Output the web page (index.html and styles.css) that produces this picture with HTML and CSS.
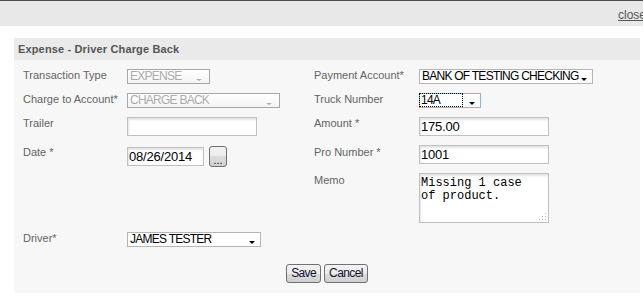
FILE: index.html
```html
<!DOCTYPE html>
<html lang="en">
<head>
  <meta charset="UTF-8" />
  <title>Expense - Driver Charge Back</title>
  <link rel="stylesheet" href="styles.css">
</head>
<body>
  <div class="topbar">
    <a href="#" class="close">close</a>
  </div>

  <div class="panel">
    <div class="panel-head">Expense - Driver Charge Back</div>

    <form class="panel-body">
      <div class="grid">
        <!-- row 1 -->
        <label class="lbl">Transaction Type</label>
        <div><span class="sel disabled w-type"><select disabled><option>EXPENSE</option></select></span></div>
        <label class="lbl">Payment Account*</label>
        <div><span class="sel w-pay"><select><option>BANK OF TESTING CHECKING</option></select></span></div>

        <!-- row 2 -->
        <label class="lbl">Charge to Account*</label>
        <div><span class="sel disabled w-charge"><select disabled><option>CHARGE BACK</option></select></span></div>
        <label class="lbl">Truck Number</label>
        <div><span class="sel focus w-truck"><select><option>14A</option></select></span></div>

        <!-- row 3 -->
        <label class="lbl">Trailer</label>
        <div><input type="text" class="txt w-text" value=""></div>
        <label class="lbl">Amount *</label>
        <div><input type="text" class="txt w-text" value="175.00"></div>

        <!-- row 4 -->
        <label class="lbl lbl-low">Date *</label>
        <div class="date-group">
          <input type="text" class="txt w-date" value="08/26/2014">
          <button type="button" class="btn btn-pick">...</button>
        </div>
        <label class="lbl lbl-low">Pro Number *</label>
        <div><input type="text" class="txt w-text" value="1001"></div>

        <!-- row 5 -->
        <span></span>
        <span></span>
        <label class="lbl lbl-low">Memo</label>
        <div class="memo-wrap"><textarea class="memo">Missing 1 case
of product.</textarea><i class="grip"></i></div>

        <!-- row 6 -->
        <label class="lbl">Driver*</label>
        <div><span class="sel w-driver"><select><option>JAMES TESTER</option></select></span></div>
      </div>

      <div class="actions">
        <button type="button" class="btn">Save</button>
        <button type="button" class="btn">Cancel</button>
      </div>
    </form>
  </div>
</body>
</html>
```

FILE: styles.css
```css
/* grises de la ventana de dialogo */
:root {
  --bar: #e8e8e8;
  --head: #eaeaea;
  --body: #f7f7f7;
  --label: #646464;
}
body {
  margin: 0;
  overflow: hidden;
  background: #fff;
  font-family: "Liberation Sans", Arial, sans-serif;
  font-size: 11px;
  color: var(--label);
}
.topbar {
  height: 25px;
  border-top: 1px solid #4a4a4a;
  background: var(--bar);
  display: flex;
  justify-content: flex-end;
  align-items: center;
}
.close {
  font-size: 12px;
  color: #555;
  margin-right: -3px;
  margin-top: 2px;
}
.panel {
  margin: 12px 3px 0 14px;
}
.panel-head {
  height: 22px;
  line-height: 23px;
  padding-left: 4px;
  background: var(--head);
  font-weight: bold;
  font-size: 11px;
  letter-spacing: 0.15px;
  color: #555;
}
.panel-body {
  margin: 0;
  background: var(--body);
  padding: 9px 9px 10px;
}
.grid {
  display: grid;
  grid-template-columns: 104px 187px 105px 1fr;
  grid-template-rows: 24px 24px 28px 28px 59px auto;
  align-items: start;
}
.lbl {
  line-height: 13px;
  white-space: nowrap;
}
.lbl-low {
  padding-top: 1px;
}

/* selects */
.sel {
  position: relative;
  display: inline-block;
  vertical-align: top;
  height: 15px;
  box-sizing: border-box;
  border: 1px solid #b5b5b5;
  background: #fff;
}
.sel select {
  -webkit-appearance: none;
  appearance: none;
  display: block;
  width: 100%;
  height: 13px;
  margin: 0;
  padding: 0 0 0 2px;
  border: 0;
  border-radius: 0;
  background: transparent;
  font-family: "Liberation Sans", Arial, sans-serif;
  font-size: 12px;
  letter-spacing: -0.75px;
  line-height: 13px;
  color: #000;
  outline: none;
}
.sel::after {
  content: "";
  position: absolute;
  right: 5px;
  bottom: 2px;
  border-left: 3px solid transparent;
  border-right: 3px solid transparent;
  border-top: 3px solid #000;
}
.sel.disabled {
  border-color: #a7a7a7;
  background: linear-gradient(#fff, #f4f4f4);
}
.sel.disabled select {
  color: #8a8a8a;
}
.sel.disabled::after {
  border-top-color: #b0b0b0;
  border-top-width: 2px;
  right: 7px;
}
.sel.focus {
  border-color: #8fb3dc;
}
.sel.focus select {
  width: 44px;
  height: 14px;
  margin: -1px 0 0 -1px;
  outline: 1px dotted #000;
  outline-offset: -1px;
}
.w-type { width: 83px; }
.w-charge { width: 153px; }
.w-pay { width: 174px; }
.w-truck { width: 62px; }
.w-driver { width: 134px; }

/* cajas de texto */
.txt {
  display: block;
  box-sizing: border-box;
  height: 19px;
  margin: 0;
  padding: 0 1px;
  border: 1px solid #c0c0c0;
  box-shadow: inset 1px 2px 2px #e4e4e4;
  font-family: "Liberation Sans", Arial, sans-serif;
  font-size: 13px;
  letter-spacing: -0.2px;
  color: #000;
  outline: none;
}
.w-text { width: 130px; }
.w-date { width: 77px; margin-top: 2px; }
.date-group {
  display: flex;
  gap: 5px;
  align-items: flex-start;
}
.memo-wrap {
  position: relative;
  width: 130px;
}
.memo {
  display: block;
  box-sizing: border-box;
  width: 130px;
  height: 50px;
  margin: 0;
  padding: 3px 1px;
  border: 1px solid #c0c0c0;
  box-shadow: inset 1px 2px 2px #e4e4e4;
  font-family: "Liberation Mono", "Courier New", monospace;
  font-size: 12px;
  line-height: 13px;
  color: #000;
  resize: none;
  overflow: hidden;
  outline: none;
}
/* puntitos del redimensionador */
.grip {
  position: absolute;
  right: 3px;
  bottom: 3px;
  width: 1px;
  height: 1px;
  background: #bbb;
  box-shadow: -3px 0 #bbb, -6px 0 #bbb, 0 -3px #bbb, -3px -3px #bbb, 0 -6px #bbb;
}

/* botones */
.btn {
  box-sizing: border-box;
  height: 19px;
  margin: 0;
  padding: 0 4px;
  border: 1px solid #707070;
  border-radius: 3px;
  background: linear-gradient(#f3f3f3, #ebebeb 50%, #dddddd 50%, #cfcfcf);
  font-family: "Liberation Sans", Arial, sans-serif;
  font-size: 12px;
  letter-spacing: -0.6px;
  line-height: 15px;
  color: #101030;
}
.btn-pick {
  width: 18px;
  height: 21px;
  margin-top: 1px;
  padding: 6px 0 0;
  font-size: 11px;
  letter-spacing: 0;
}
.actions {
  display: flex;
  justify-content: center;
  gap: 3px;
  margin-top: 17px;
}
```
